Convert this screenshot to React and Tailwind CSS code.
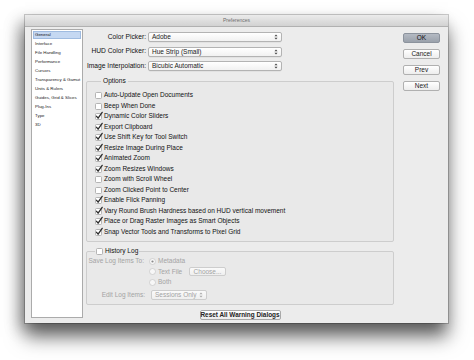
import React from "react";

const sidebarItems = [
  "General",
  "Interface",
  "File Handling",
  "Performance",
  "Cursors",
  "Transparency & Gamut",
  "Units & Rulers",
  "Guides, Grid & Slices",
  "Plug-Ins",
  "Type",
  "3D",
];

const options = [
  ["Auto-Update Open Documents", false],
  ["Beep When Done", false],
  ["Dynamic Color Sliders", true],
  ["Export Clipboard", true],
  ["Use Shift Key for Tool Switch", true],
  ["Resize Image During Place", true],
  ["Animated Zoom", true],
  ["Zoom Resizes Windows", true],
  ["Zoom with Scroll Wheel", false],
  ["Zoom Clicked Point to Center", false],
  ["Enable Flick Panning", true],
  ["Vary Round Brush Hardness based on HUD vertical movement", true],
  ["Place or Drag Raster Images as Smart Objects", true],
  ["Snap Vector Tools and Transforms to Pixel Grid", true],
];

function Checkbox({ checked, disabled }) {
  return (
    <svg width="8" height="8" viewBox="0 0 8 8" className="shrink-0 overflow-visible">
      <rect x="0.5" y="1.5" width="6" height="6" rx="1" fill="#fff" stroke={disabled ? "#c4c4c4" : "#a3a3a3"} strokeWidth="0.8" />
      {checked && (
        <path d="M1.6 4.3 L3.1 6.2 L7.2 0.4" fill="none" stroke="#2a2a2a" strokeWidth="1.3" strokeLinecap="round" strokeLinejoin="round" />
      )}
    </svg>
  );
}

function Radio({ selected }) {
  return (
    <svg width="7" height="7" viewBox="0 0 7 7" className="shrink-0">
      <circle cx="3.5" cy="3.5" r="3" fill="#f7f7f7" stroke="#c6c6c6" strokeWidth="0.7" />
      {selected && <circle cx="3.5" cy="3.5" r="1.1" fill="#8a8a8a" />}
    </svg>
  );
}

function Arrows({ color = "#444" }) {
  return (
    <svg width="4" height="6" viewBox="0 0 4 6" className="shrink-0">
      <path d="M0.5 2.3 L2 0.6 L3.5 2.3 Z" fill={color} />
      <path d="M0.5 3.7 L2 5.4 L3.5 3.7 Z" fill={color} />
    </svg>
  );
}

function Select({ value }) {
  return (
    <div className="w-[134px] h-[10px] flex items-center justify-between pl-[3px] pr-[3px] rounded-[2px] border border-[#b3b3b3] bg-gradient-to-b from-[#ffffff] to-[#f1f1f1] text-[6.5px] text-[#1a1a1a] shadow-[0_0.5px_0_rgba(0,0,0,0.08)]">
      <span>{value}</span>
      <Arrows />
    </div>
  );
}

function SideButton({ label, primary }) {
  return (
    <div
      className={
        primary
          ? "w-[37px] h-[10px] flex items-center justify-center rounded-[2px] border border-[#8c939d] bg-gradient-to-b from-[#b4bac3] to-[#9aa1ab] text-[6.5px] text-[#111]"
          : "w-[37px] h-[10px] flex items-center justify-center rounded-[2px] border border-[#b0b0b0] bg-gradient-to-b from-[#ffffff] to-[#ededed] text-[6.5px] text-[#222]"
      }
    >
      {label}
    </div>
  );
}

export default function App() {
  return (
    <div
      className="w-[474px] h-[360px] bg-white overflow-hidden pt-[15px] pl-[25px]"
      style={{ fontFamily: '"Liberation Sans", Arial, sans-serif' }}
    >
      <div className="w-[423px] h-[308px] bg-[#ececec] flex flex-col shadow-[0_0_0_1px_rgba(0,0,0,0.2),0_14px_18px_rgba(0,0,0,0.55),-6px_6px_14px_rgba(0,0,0,0.25)]">
        <div className="h-[12px] shrink-0 bg-gradient-to-b from-[#ebebeb] to-[#d2d2d2] border-b border-[#b1b1b1] flex items-center justify-center text-[5px] text-[#6c6c6c]">
          Preferences
        </div>
        <div className="flex flex-1 pt-[2px] pl-[6px]">
          <div className="w-[52px] h-[289px] bg-white border border-[#ababab] flex flex-col pt-[1px] px-[1px]">
            {sidebarItems.map((item, i) => (
              <div
                key={item}
                className={
                  i === 0
                    ? "h-[8px] mb-[1px] flex items-center pl-[1px] bg-[#c5d8f2] border border-[#9fbbe0] text-[4.4px] text-[#111]"
                    : "h-[8px] mb-[1px] flex items-center pl-[2px] text-[4.4px] text-[#222]"
                }
              >
                {item}
              </div>
            ))}
          </div>

          <div className="ml-[3px] w-[308px] flex flex-col">
            <div className="mt-[3px] flex flex-col gap-[4.5px]">
              {[
                ["Color Picker:", "Adobe"],
                ["HUD Color Picker:", "Hue Strip (Small)"],
                ["Image Interpolation:", "Bicubic Automatic"],
              ].map(([label, value]) => (
                <div key={label} className="flex items-center h-[10px]">
                  <div className="w-[60px] text-right text-[6.7px] text-[#111] whitespace-nowrap">{label}</div>
                  <div className="ml-[2px]">
                    <Select value={value} />
                  </div>
                </div>
              ))}
            </div>

            <fieldset className="mt-[6px] h-[165px] border border-[#cdcdcd] rounded-[2px] bg-[#e9e9e9] pl-[8px] pt-[2px]">
              <legend className="ml-[6px] px-[2px] text-[6.6px] text-[#111] leading-[8px]">Options</legend>
              <div className="flex flex-col mt-[3px]">
                {options.map(([text, checked]) => (
                  <div key={text} className="h-[10.5px] flex items-center gap-[1px] text-[6.5px] text-[#111] whitespace-nowrap">
                    <Checkbox checked={checked} />
                    <span>{text}</span>
                  </div>
                ))}
              </div>
            </fieldset>

            <fieldset className="mt-[5px] h-[58px] border border-[#cdcdcd] rounded-[2px] bg-[#e9e9e9] pt-[1px]">
              <legend className="ml-[8px] px-[1px] flex items-center gap-[1px] text-[6.6px] text-[#111] leading-[8px]">
                <Checkbox checked={false} />
                <span>History Log</span>
              </legend>
              <div className="flex flex-col text-[6.5px] text-[#a3a3a3]">
                <div className="flex items-center h-[10.5px]">
                  <div className="w-[57px] text-right whitespace-nowrap">Save Log Items To:</div>
                  <div className="ml-[5px] flex items-center gap-[2px]">
                    <Radio selected />
                    <span>Metadata</span>
                  </div>
                </div>
                <div className="flex items-center h-[10.5px]">
                  <div className="w-[57px]" />
                  <div className="ml-[5px] w-[37px] flex items-center gap-[2px]">
                    <Radio />
                    <span>Text File</span>
                  </div>
                  <div className="ml-[3px] w-[37px] h-[9px] flex items-center justify-center rounded-[2px] border border-[#cdcdcd] bg-gradient-to-b from-[#fafafa] to-[#efefef] text-[#a3a3a3]">
                    Choose...
                  </div>
                </div>
                <div className="flex items-center h-[10.5px]">
                  <div className="w-[57px]" />
                  <div className="ml-[5px] flex items-center gap-[2px]">
                    <Radio />
                    <span>Both</span>
                  </div>
                </div>
                <div className="flex items-center h-[12px] mt-[1px]">
                  <div className="w-[58px] text-right whitespace-nowrap">Edit Log Items:</div>
                  <div className="ml-[6px] w-[56px] h-[10px] flex items-center justify-between px-[3px] rounded-[2px] border border-[#cdcdcd] bg-gradient-to-b from-[#fafafa] to-[#efefef]">
                    <span>Sessions Only</span>
                    <Arrows color="#a8a8a8" />
                  </div>
                </div>
              </div>
            </fieldset>

            <div className="mt-[5px] flex justify-center">
              <div className="w-[81px] h-[10px] flex items-center justify-center rounded-[2px] border border-[#a9a9a9] bg-gradient-to-b from-[#ffffff] to-[#ececec] text-[6.4px] font-bold text-[#222] whitespace-nowrap">
                Reset All Warning Dialogs
              </div>
            </div>
          </div>

          <div className="ml-[9px] mt-[4px] flex flex-col gap-[6px]">
            <SideButton label="OK" primary />
            <SideButton label="Cancel" />
            <SideButton label="Prev" />
            <SideButton label="Next" />
          </div>
        </div>
      </div>
    </div>
  );
}
